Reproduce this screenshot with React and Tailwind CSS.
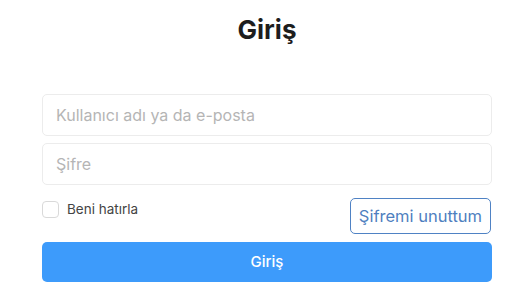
import { useState } from 'react'

export default function App() {
  const [remember, setRemember] = useState(false)

  return (
    <div className="w-[530px] h-[299px] bg-white font-['Inter',sans-serif] overflow-hidden">
      <h1 className="pt-[14px] text-center text-[26px] leading-[32px] font-bold text-[#1d1d1d] pl-[4px]">Giriş</h1>

      <form className="ml-[42px] w-[450px] mt-[48px] flex flex-col" onSubmit={e => e.preventDefault()}>
        <input
          type="text"
          placeholder="Kullanıcı adı ya da e-posta"
          className="h-[42px] w-full rounded-[5px] border border-[#ececec] px-[13px] text-[16px] text-[#333] placeholder:text-[#b5b5b5] outline-none"
        />
        <input
          type="password"
          placeholder="Şifre"
          className="mt-[7px] h-[42px] w-full rounded-[5px] border border-[#ececec] px-[13px] text-[16px] text-[#333] placeholder:text-[#b5b5b5] outline-none"
        />

        <div className="mt-[13px] flex items-start justify-between">
          <label className="flex items-center gap-[8px] pt-[1px] cursor-pointer">
            <input
              type="checkbox"
              checked={remember}
              onChange={e => setRemember(e.target.checked)}
              className="appearance-none w-[17px] h-[17px] rounded-[4px] border border-[#d9d9d9] bg-white"
            />
            <span className="text-[13.5px] text-[#444]">Beni hatırla</span>
          </label>
          <button
            type="button"
            className="mr-[1px] h-[36px] px-[8px] rounded-[5px] border border-[#4f82c4] text-[16.5px] text-[#4f7fc0] bg-white"
          >
            Şifremi unuttum
          </button>
        </div>

        <button
          type="submit"
          className="mt-[8px] h-[40px] w-full rounded-[5px] bg-[#3d9bfb] text-white text-[15px] font-medium"
        >
          Giriş
        </button>
      </form>
    </div>
  )
}
